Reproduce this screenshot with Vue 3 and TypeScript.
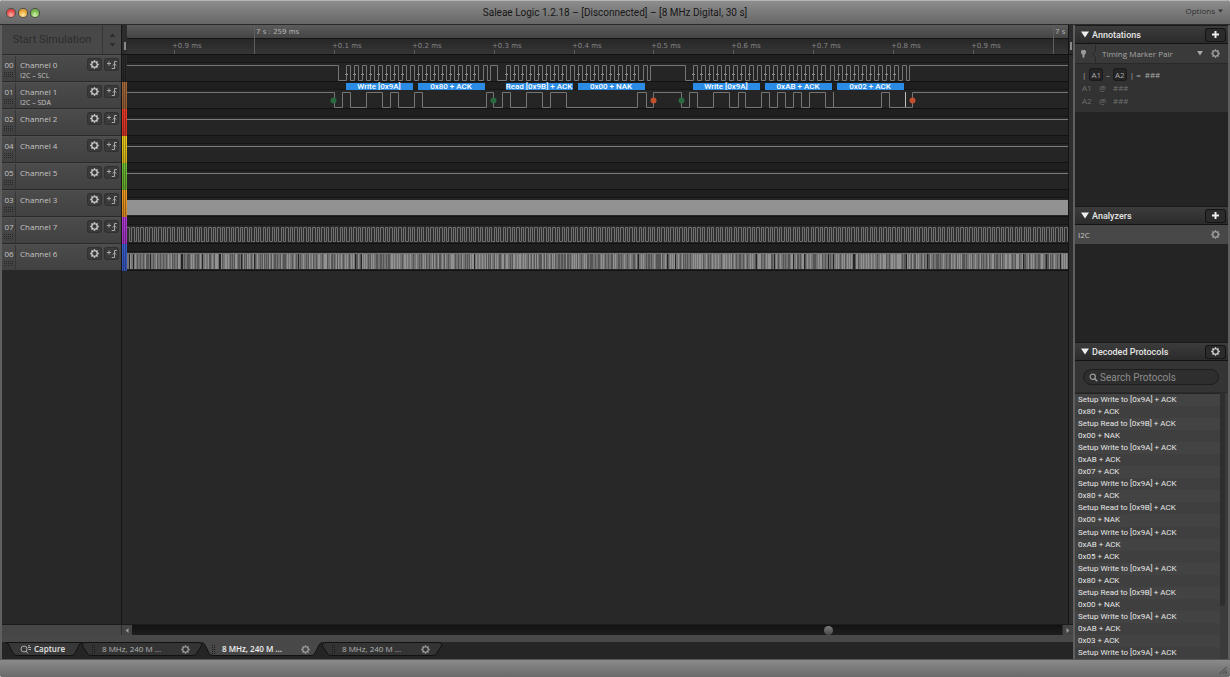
<script setup lang="ts">
import { ref } from 'vue'

interface Channel {
  num: string
  name: string
  sub?: string
  tone: string
  kind: 'scl' | 'sda' | 'flat' | 'solid' | 'clock' | 'dense'
}

const channels: Channel[] = [
  { num: '00', name: 'Channel 0', sub: 'I2C – SCL', tone: 'black', kind: 'scl' },
  { num: '01', name: 'Channel 1', sub: 'I2C – SDA', tone: 'brown', kind: 'sda' },
  { num: '02', name: 'Channel 2', tone: 'red', kind: 'flat' },
  { num: '04', name: 'Channel 4', tone: 'yellow', kind: 'flat' },
  { num: '05', name: 'Channel 5', tone: 'green', kind: 'flat' },
  { num: '03', name: 'Channel 3', tone: 'orange', kind: 'solid' },
  { num: '07', name: 'Channel 7', tone: 'purple', kind: 'clock' },
  { num: '06', name: 'Channel 6', tone: 'blue', kind: 'dense' },
]

const ticks = ['+0.9', '', '+0.1', '+0.2', '+0.3', '+0.4', '+0.5', '+0.6', '+0.7', '+0.8', '+0.9', '']
const tickX = (i: number) => 47 + i * 80 - (i > 5 ? 1 : 0)

const HIGH = 10
const LOW = 25
const FAR = 4000

// Square wave that starts high and toggles at every listed position.
function wave(toggles: number[], high = HIGH, low = LOW): string {
  let d = `M0 ${high + 0.5}`
  let up = true
  for (const x of toggles) {
    up = !up
    d += `H${Math.round(x) + 0.5}V${(up ? high : low) + 0.5}`
  }
  return d + `H${FAR}`
}

const bursts = [
  { start: 219, count: 18 },
  { start: 379, count: 18 },
  { start: 566, count: 27 },
]
const STEP = 8.03
const sclToggles: number[] = []
const samples: number[] = []
const idle = [[211], [363, 370], [523, 558]]
bursts.forEach((b, n) => {
  sclToggles.push(...idle[n])
  for (let i = 0; i < b.count; i++) {
    const x = b.start + i * STEP
    sclToggles.push(x, x + 4)
    if (i % 9 !== 8) samples.push(Math.round(x))
  }
})
sclToggles.push(782)

const sclPath = wave(sclToggles)
const sdaPath = wave([
  207, 215, 223, 239, 255, 263, 271, 287, 295, 359, 366, 375, 383, 399, 415, 423, 439, 510, 519, 526,
  554, 562, 570, 586, 602, 611, 618, 634, 642, 650, 658, 666, 674, 682, 698, 754, 762, 785,
])

const bytes = [
  { x: 219, text: 'Write [0x9A]' },
  { x: 291, text: '0x80 + ACK' },
  { x: 379, text: 'Read [0x9B] + ACK' },
  { x: 451, text: '0x00 + NAK' },
  { x: 566, text: 'Write [0x9A]' },
  { x: 638, text: '0xAB + ACK' },
  { x: 710, text: '0x02 + ACK' },
]
const marks = [
  { x: 206, stop: false },
  { x: 366, stop: false },
  { x: 526, stop: true },
  { x: 554, stop: false },
  { x: 785, stop: true },
]

const clockToggles: number[] = []
for (let x = 2; x < 2400; x += 4.53) clockToggles.push(x, x + 2.2)
const clockPath = wave(clockToggles, 10, 24)

let seed = 17
const rand = () => (seed = (seed * 16807) % 2147483647) / 2147483647
let darkPath = ''
let lightPath = ''
let gapPath = ''
for (let x = 2; x < 2400; ) {
  const r = rand()
  if (r < 0.06) gapPath += `M${x + 0.5} 10V25`
  else if (r < 0.55) darkPath += `M${x + 0.5} 10V25`
  else lightPath += `M${x + 0.5} 10V25`
  x += 1 + Math.floor(rand() * 2.6)
}

const entries = [
  'Setup Write to [0x9A] + ACK', '0x80 + ACK', 'Setup Read to [0x9B] + ACK', '0x00 + NAK',
  'Setup Write to [0x9A] + ACK', '0xAB + ACK', '0x07 + ACK',
  'Setup Write to [0x9A] + ACK', '0x80 + ACK', 'Setup Read to [0x9B] + ACK', '0x00 + NAK',
  'Setup Write to [0x9A] + ACK', '0xAB + ACK', '0x05 + ACK',
  'Setup Write to [0x9A] + ACK', '0x80 + ACK', 'Setup Read to [0x9B] + ACK', '0x00 + NAK',
  'Setup Write to [0x9A] + ACK', '0xAB + ACK', '0x03 + ACK',
  'Setup Write to [0x9A] + ACK',
]

const tabs = [0, 1, 2]
const active = ref(1)
const scroll = ref(751)
const query = ref('')
</script>

<template>
  <div class="window">
    <svg class="defs" width="0" height="0" aria-hidden="true">
      <symbol id="gear" viewBox="0 0 16 16">
        <circle cx="8" cy="8" r="4.8" fill="none" stroke="currentColor" stroke-width="1.9" />
        <path
          d="M8 0.4V3M8 13V15.6M0.4 8H3M13 8H15.6M2.6 2.6L4.5 4.5M11.5 11.5L13.4 13.4M13.4 2.6L11.5 4.5M4.5 11.5L2.6 13.4"
          stroke="currentColor" stroke-width="2.4" fill="none"
        />
      </symbol>
      <symbol id="lens" viewBox="0 0 12 12">
        <circle cx="5" cy="5" r="3.5" fill="none" stroke="currentColor" stroke-width="1.6" />
        <path d="M7.5 7.5L11 11" stroke="currentColor" stroke-width="2" />
      </symbol>
    </svg>

    <header class="titlebar">
      <div class="lights">
        <button class="light close" aria-label="Close"></button>
        <button class="light mini" aria-label="Minimize"></button>
        <button class="light zoom" aria-label="Zoom"></button>
      </div>
      <h1>Saleae Logic 1.2.18 – [Disconnected] – [8 MHz Digital, 30 s]</h1>
      <button class="options">
        Options
        <svg width="5" height="4" viewBox="0 0 6 5"><path d="M0 0.5H6L3 4.5Z" fill="#333" /></svg>
      </button>
    </header>

    <div class="body">
      <main class="main">
        <div class="stage">
          <div class="controls">
            <div class="start">
              <button class="run" disabled>Start Simulation</button>
              <button class="stepper" aria-label="Simulation settings">
                <svg width="7" height="14" viewBox="0 0 7 14">
                  <path d="M0.5 4L3.5 0.5L6.5 4ZM0.5 10L3.5 13.5L6.5 10Z" fill="#2d2d2d" />
                </svg>
              </button>
            </div>
            <div v-for="c in channels" :key="c.num" class="channel">
              <div class="num">
                <span>{{ c.num }}</span>
                <svg width="10" height="6" viewBox="0 0 10 6">
                  <path d="M0 0.5H10M0 2.5H10M0 4.5H10" stroke="#262626" stroke-dasharray="1 1" />
                </svg>
              </div>
              <div class="label">
                <span>{{ c.name }}</span>
                <small v-if="c.sub">{{ c.sub }}</small>
              </div>
              <button class="mini-btn" :aria-label="c.name + ' settings'">
                <svg width="9" height="9"><use href="#gear" /></svg>
              </button>
              <button class="mini-btn" :aria-label="c.name + ' trigger'">
                <svg width="10" height="8" viewBox="0 0 10 8" fill="none" stroke="#a9a9a9">
                  <path d="M0 2.5H4M2 0.5V4.5" />
                  <path d="M9.8 0.5H7.5V7.5H4.8M5.8 4.5L7.5 2.8L9.2 4.5" />
                </svg>
              </button>
            </div>
          </div>

          <div class="strip">
            <div class="strip-head"><i></i></div>
            <div v-for="c in channels" :key="c.num" class="swatch" :class="c.tone"></div>
          </div>

          <div class="plot">
            <svg class="ruler" width="100%" height="30">
              <rect x="0" y="0" width="100%" height="13" fill="url(#rulerTop)" />
              <defs>
                <linearGradient id="rulerTop" x1="0" y1="0" x2="0" y2="1">
                  <stop offset="0" stop-color="#5c5c5c" />
                  <stop offset="1" stop-color="#444" />
                </linearGradient>
                <linearGradient id="rulerLow" x1="0" y1="0" x2="0" y2="1">
                  <stop offset="0" stop-color="#272727" />
                  <stop offset="1" stop-color="#353535" />
                </linearGradient>
              </defs>
              <rect x="0" y="13" width="100%" height="1" fill="#151515" />
              <rect x="0" y="14" width="100%" height="15" fill="url(#rulerLow)" />
              <rect x="0" y="29" width="100%" height="1" fill="#111" />
              <path d="M127.5 0V29M926.5 0V29" stroke="#5e5e5e" />
              <text x="129" y="9" class="major">7 s : 259 ms</text>
              <text x="928" y="9" class="major">7 s</text>
              <g v-for="(t, i) in ticks" :key="i">
                <template v-if="t">
                  <path :d="`M${tickX(i) + 0.5} 25V29`" stroke="#5c5c5c" />
                  <text :x="tickX(i) - 2" y="23" class="minor">{{ t }} ms</text>
                </template>
              </g>
            </svg>
            <div v-for="c in channels" :key="c.num" class="lane">
              <svg width="100%" height="27" fill="none">
                <template v-if="c.kind === 'scl'">
                  <path :d="sclPath" stroke="#757575" />
                  <path v-for="x in samples" :key="x" :d="`M${x - 1} 19.5H${x + 2}M${x + 0.5} 18V20`" stroke="#8e8e8e" />
                </template>
                <template v-else-if="c.kind === 'sda'">
                  <g v-for="b in bytes" :key="b.x">
                    <rect :x="b.x" y="1" width="67" height="7" fill="#2b8ce6" />
                    <text :x="b.x + 33" y="7" class="byte">{{ b.text }}</text>
                  </g>
                  <path :d="sdaPath" stroke="#757575" />
                  <path d="M706.5 10V25" stroke="#757575" />
                  <path d="M778.5 10V25" stroke="#c0c0c0" />
                  <circle v-for="m in marks" :key="m.x" :cx="m.x + 0.5" cy="18.5" r="3" :fill="m.stop ? '#c2502f' : '#2a6a41'" />
                </template>
                <path v-else-if="c.kind === 'flat'" d="M0 10.5H4000" stroke="#7c7c7c" />
                <rect v-else-if="c.kind === 'solid'" x="0" y="10" width="100%" height="15" fill="#929292" />
                <template v-else-if="c.kind === 'clock'">
                  <rect x="0" y="10" width="100%" height="15" fill="#2f2f2f" />
                  <path :d="clockPath" stroke="#707070" />
                </template>
                <template v-else>
                  <rect x="0" y="9" width="100%" height="16" fill="#747474" />
                  <path :d="darkPath" stroke="#565656" />
                  <path :d="lightPath" stroke="#929292" />
                  <path :d="gapPath" stroke="#242424" />
                </template>
              </svg>
            </div>
          </div>

          <div class="gutter"><div class="strip-head"><i></i></div></div>
        </div>

        <div class="scroller">
          <div class="scroll-pad"></div>
          <button class="arrow" aria-label="Scroll left">
            <svg width="4" height="5" viewBox="0 0 4 5"><path d="M3.5 0V5L0.5 2.5Z" fill="#999" /></svg>
          </button>
          <input v-model.number="scroll" type="range" min="0" max="1000" aria-label="Timeline position" />
          <button class="arrow" aria-label="Scroll right">
            <svg width="4" height="5" viewBox="0 0 4 5"><path d="M0.5 0V5L3.5 2.5Z" fill="#999" /></svg>
          </button>
        </div>
        <div class="band"></div>

        <nav class="tabs">
          <button class="tab capture">
            <svg class="shape" width="78" height="15" viewBox="0 0 78 15">
              <path d="M0 0.5Q3 0.5 4 3L8 11Q9 13.5 12 13.5H66Q69 13.5 70 11L74 3Q75 0.5 78 0.5Z" fill="#383838" stroke="#111" />
            </svg>
            <svg class="cap-icon" width="11" height="9" viewBox="0 0 11 9" fill="none" stroke="#aaa">
              <circle cx="4" cy="4" r="3" />
              <path d="M6 6L8 8.5M8 2.5H11M8.5 4.5H11M8 0.8H10" />
            </svg>
            <span>Capture</span>
          </button>
          <button
            v-for="t in tabs" :key="t" class="tab" :class="{ active: t === active }"
            @click="active = t"
          >
            <svg class="shape" width="122" height="15" viewBox="0 0 122 15">
              <template v-if="t === active">
                <path d="M-1 -1L4 3L8 11Q9 13.5 12 13.5H110Q113 13.5 114 11L118 3L123 -1Z" fill="#484848" />
                <path d="M1 0.5Q3 1 4 3L8 11Q9 13.5 12 13.5H110Q113 13.5 114 11L118 3Q119 1 121 0.5" fill="none" stroke="#111" />
              </template>
              <path
                v-else
                d="M1 3Q2 0.5 5 0.5H117Q120 0.5 121 3L116 11Q115 13.5 112 13.5H10Q7 13.5 6 11Z"
                fill="#343434" stroke="#111"
              />
            </svg>
            <svg class="grip" width="3" height="9" viewBox="0 0 3 9">
              <path d="M0.5 0V9M2.5 0V9" stroke="#1c1c1c" stroke-dasharray="1 1" />
            </svg>
            <span>8 MHz, 240 M ...</span>
            <svg class="tab-gear" width="9" height="9"><use href="#gear" /></svg>
          </button>
        </nav>
      </main>

      <aside class="side">
        <section class="panel annotations">
          <div class="head">
            <svg width="8" height="7" viewBox="0 0 8 7"><path d="M0 0.5H8L4 6.5Z" fill="#eee" /></svg>
            <h2>Annotations</h2>
            <button class="head-btn" aria-label="Add annotation">
              <svg width="7" height="7" viewBox="0 0 7 7"><path d="M3.5 0V7M0 3.5H7" stroke="#eee" stroke-width="2" /></svg>
            </button>
          </div>
          <div class="pair">
            <svg class="pin" width="5" height="8" viewBox="0 0 5 8"><path d="M1 0H4L5 1V3L3.5 5V7L2.5 8L1.5 7V5L0 3V1Z" fill="#999" /></svg>
            <svg class="notch" width="4" height="18" viewBox="0 0 4 18"><path d="M3.5 0V6L0.5 9L3.5 12V18" fill="none" stroke="#292929" /></svg>
            <select aria-label="Annotation type"><option>Timing Marker Pair</option></select>
            <svg class="caret" width="6" height="5" viewBox="0 0 7 6"><path d="M0 0H7L3.5 5.5Z" fill="#aaa" /></svg>
            <button class="plain" aria-label="Annotation settings"><svg width="9" height="9"><use href="#gear" /></svg></button>
          </div>
          <div class="values">
            <p class="delta">| <b>A1</b> – <b>A2</b> | = <span>###</span></p>
            <p><span class="c1">A1</span><span class="c2">@</span>###</p>
            <p><span class="c1">A2</span><span class="c2">@</span>###</p>
          </div>
        </section>

        <section class="panel analyzers">
          <div class="head">
            <svg width="8" height="7" viewBox="0 0 8 7"><path d="M0 0.5H8L4 6.5Z" fill="#eee" /></svg>
            <h2>Analyzers</h2>
            <button class="head-btn" aria-label="Add analyzer">
              <svg width="7" height="7" viewBox="0 0 7 7"><path d="M3.5 0V7M0 3.5H7" stroke="#eee" stroke-width="2" /></svg>
            </button>
          </div>
          <div class="analyzer">
            <span>I2C</span>
            <button class="plain" aria-label="I2C settings"><svg width="9" height="9"><use href="#gear" /></svg></button>
          </div>
        </section>

        <section class="panel decoded">
          <div class="head">
            <svg width="8" height="7" viewBox="0 0 8 7"><path d="M0 0.5H8L4 6.5Z" fill="#eee" /></svg>
            <h2>Decoded Protocols</h2>
            <button class="head-btn" aria-label="Decoded protocol settings">
              <svg width="9" height="9"><use href="#gear" /></svg>
            </button>
          </div>
          <div class="search">
            <label class="field">
              <svg width="9" height="9"><use href="#lens" /></svg>
              <input v-model="query" type="text" placeholder="Search Protocols" aria-label="Search Protocols" />
            </label>
          </div>
          <div class="results">
            <ul>
              <li v-for="(e, i) in entries" :key="i">{{ e }}</li>
            </ul>
            <div class="bar"><i></i></div>
          </div>
        </section>
      </aside>
    </div>

    <footer class="status">
      <svg width="8" height="8" viewBox="0 0 8 8"><path d="M0.5 8L8 0.5M3.5 8L8 3.5M6 8L8 6" stroke="#444" /></svg>
    </footer>
  </div>
</template>

<style>
html,
body {
  background: #c9cccb;
}
</style>

<style scoped>
.window {
  height: 100vh;
  display: flex;
  flex-direction: column;
  overflow: hidden;
  border-radius: 4px 4px 3px 3px;
  background: #5f5f5f;
  font-family: "Open Sans", "Noto Sans", sans-serif;
  font-size: 8px;
  line-height: 12px;
  color: #c4c4c4;
}
.defs {
  position: absolute;
}
svg {
  display: block;
  flex: none;
}
button {
  margin: 0;
  padding: 0;
  border: 0;
  background: none;
  font: inherit;
  color: inherit;
}
h1,
h2,
p,
ul {
  margin: 0;
  padding: 0;
  font: inherit;
  list-style: none;
}

.titlebar {
  flex: none;
  height: 24px;
  box-sizing: border-box;
  display: grid;
  grid-template-columns: 1fr auto 1fr;
  align-items: center;
  padding: 0 7px;
  border-top: 1px solid #b5b5b5;
  background: linear-gradient(#8d8d8d, #666);
}
.lights {
  display: flex;
  gap: 4px;
}
.light {
  width: 8px;
  height: 8px;
  border-radius: 50%;
  box-shadow: 0 0 0 1px #4a4a4a;
  box-sizing: border-box;
}
.close {
  background: radial-gradient(circle at 50% 75%, #ffb0a5, #e0433f 65%);
}
.mini {
  background: radial-gradient(circle at 50% 75%, #ffe9a0, #e5a02f 65%);
}
.zoom {
  background: radial-gradient(circle at 50% 75%, #d5f5ae, #6fb045 65%);
}
h1 {
  font-family: Roboto, sans-serif;
  font-size: 10px;
  color: #161616;
}
.options {
  justify-self: end;
  display: flex;
  align-items: center;
  gap: 3px;
  padding-bottom: 3px;
  color: #303030;
}

.body {
  flex: 1;
  min-height: 0;
  display: grid;
  grid-template-columns: minmax(0, 1fr) 153px;
  gap: 2px;
  padding: 0 2px;
  border-top: 1px solid #2a2a2a;
}
.main {
  display: flex;
  flex-direction: column;
  min-height: 0;
  background: #484848;
}
.stage {
  flex: 1;
  min-height: 0;
  display: grid;
  grid-template-columns: 119px 6px minmax(0, 1fr) 5px;
  background: #282828;
}
.start {
  height: 30px;
  box-sizing: border-box;
  display: flex;
  background: #484848;
  border-bottom: 1px solid #2a2a2a;
}
.run {
  flex: 1;
  font-family: Roboto, sans-serif;
  font-size: 11px;
  color: #2c2c2c;
}
.stepper {
  width: 19px;
  display: grid;
  place-items: center;
  border-left: 1px solid #363636;
}
.channel {
  height: 27px;
  box-sizing: border-box;
  display: flex;
  align-items: flex-start;
  gap: 4px;
  padding-right: 3px;
  background: linear-gradient(#4b4b4b, #414141);
  border-top: 1px solid #505050;
  border-bottom: 1px solid #292929;
}
.num {
  width: 14px;
  height: 25px;
  padding: 3px 0 0 1px;
  box-sizing: border-box;
  border-right: 1px solid #363636;
  display: flex;
  flex-direction: column;
  align-items: center;
  gap: 1px;
}
.label {
  flex: 1;
  padding-top: 3px;
}
.label span,
.label small {
  display: block;
}
.label small {
  font-size: 7px;
  line-height: 10px;
}
.mini-btn {
  width: 13px;
  height: 11px;
  margin-top: 3px;
  display: grid;
  place-items: center;
  border-radius: 2px;
  background: #3a3a3a;
  box-shadow: 0 0 0 1px #303030;
  color: #d6d6d6;
}

.strip {
  border-left: 1px solid #151515;
}
.strip-head {
  height: 30px;
  box-sizing: border-box;
  padding: 17px 1px 0;
  background: #2c2c2c;
  border-bottom: 1px solid #111;
}
.strip-head i {
  display: block;
  width: 2px;
  height: 8px;
  margin: 0 auto;
  background: #8a8a8a;
}
.swatch {
  height: 27px;
  background-image:
    linear-gradient(90deg, transparent 1px, rgba(0, 0, 0, 0.3) 1px 2px, transparent 2px 3px, rgba(0, 0, 0, 0.3) 3px 4px, transparent 4px),
    linear-gradient(transparent, rgba(0, 0, 0, 0.15));
}
.black { background-color: #2c2c2c; }
.brown { background-color: #a3683a; }
.red { background-color: #ea3a2a; }
.yellow { background-color: #ecc91c; }
.green { background-color: #6fbc33; }
.orange { background-color: #f29a22; }
.purple { background-color: #b03ad6; }
.blue { background-color: #3a5fd0; }

.plot {
  min-width: 0;
}
.lane {
  height: 27px;
  overflow: hidden;
  background: linear-gradient(#1f1f1f 0 7px, #161616 7px 8px, #252525 8px 26px, #121212 26px);
}
.major {
  font-family: "DejaVu Sans", sans-serif;
  font-size: 7px;
  fill: #b4b4b4;
}
.minor {
  font-family: "DejaVu Sans", sans-serif;
  font-size: 7px;
  fill: #868686;
}
.byte {
  font-family: Roboto, sans-serif;
  font-size: 8px;
  font-weight: 500;
  fill: #fff;
  text-anchor: middle;
}
.gutter {
  background: #2e2e2e;
  border-left: 1px solid #141414;
}

.scroller {
  flex: none;
  height: 11px;
  display: flex;
  background: #161616;
  border-top: 1px solid #1c1c1c;
  box-sizing: border-box;
}
.scroll-pad {
  width: 119px;
  background: #464646;
}
.arrow {
  width: 11px;
  display: grid;
  place-items: center;
  background: #444;
  border-left: 1px solid #2b2b2b;
}
.scroller input {
  flex: 1;
  min-width: 0;
  height: 10px;
  margin: 0;
  appearance: none;
  background: linear-gradient(#121212, #1e1e1e);
}
.scroller input::-webkit-slider-thumb {
  appearance: none;
  width: 9px;
  height: 9px;
  border-radius: 50%;
  background: linear-gradient(#7a7a7a, #484848);
}
.band {
  flex: none;
  height: 7px;
  background: #484848;
}
.tabs {
  flex: none;
  height: 17px;
  display: flex;
  padding-left: 4px;
  background: #252525;
}
.tab {
  position: relative;
  z-index: 0;
  width: 120px;
  height: 14px;
  display: flex;
  align-items: center;
  padding: 0 12px 0 10px;
  box-sizing: border-box;
  color: #b2b2b2;
}
.tab span {
  margin-left: 7px;
}
.shape {
  position: absolute;
  z-index: -1;
  left: -1px;
  top: 0;
  overflow: visible;
}
.capture {
  width: 76px;
  color: #e2e2e2;
  font-weight: 600;
  padding: 0 0 0 14px;
}
.capture span {
  margin-left: 3px;
}
.active {
  z-index: 1;
  color: #f0f0f0;
  font-weight: 600;
}
.tab-gear {
  margin-left: auto;
  color: #a0a0a0;
}

.side {
  display: flex;
  flex-direction: column;
  min-height: 0;
  background: #242424;
}
.annotations {
  flex: 0 0 181px;
}
.analyzers {
  flex: 0 0 136px;
}
.decoded {
  flex: 1;
  min-height: 0;
  display: flex;
  flex-direction: column;
}
.head {
  flex: none;
  height: 19px;
  box-sizing: border-box;
  display: flex;
  align-items: center;
  gap: 3px;
  padding: 0 3px 0 6px;
  border-top: 1px solid #1a1a1a;
  border-bottom: 1px solid #131313;
  background: linear-gradient(#3c3c3c, #2b2b2b);
}
h2 {
  flex: 1;
  font-family: Roboto, sans-serif;
  font-size: 9px;
  font-weight: 500;
  color: #e4e4e4;
}
.head-btn {
  width: 19px;
  height: 12px;
  display: grid;
  place-items: center;
  border-radius: 2px;
  background: #2b2b2b;
  box-shadow: 0 0 0 1px #141414;
  color: #dcdcdc;
}
.pair {
  height: 20px;
  box-sizing: border-box;
  display: flex;
  align-items: center;
  padding: 0 8px 0 6px;
  background: #3a3a3a;
  border-bottom: 1px solid #292929;
}
.notch {
  margin: 0 6px 0 6px;
}
.pair select {
  flex: 1;
  min-width: 0;
  appearance: none;
  border: 0;
  padding: 0;
  background: none;
  font: inherit;
  color: #a6a6a6;
}
.pair .plain {
  margin-left: 8px;
}
.plain {
  color: #a8a8a8;
}
.values {
  padding: 4px 7px 5px;
  background: #323232;
  color: #6f6f6f;
}
.values p {
  height: 13px;
  line-height: 13px;
  display: flex;
}
.values .delta {
  gap: 4px;
  color: #aaa;
}
.delta b {
  font-weight: 400;
  height: 11px;
  line-height: 11px;
  padding: 0 1px;
  margin: 1px 0;
  border-radius: 2px;
  background: #242424;
  box-shadow: 0 0 0 1px #1a1a1a;
}
.c1 {
  width: 17px;
}
.c2 {
  width: 14px;
}
.analyzer {
  height: 19px;
  display: flex;
  align-items: center;
  justify-content: space-between;
  padding: 0 8px 0 3px;
  background: #484848;
}
.search {
  flex: none;
  padding: 8px 9px 7px 8px;
  background: #343434;
  border-bottom: 1px solid #2a2a2a;
}
.field {
  height: 16px;
  box-sizing: border-box;
  display: flex;
  align-items: center;
  gap: 2px;
  padding: 0 5px;
  border: 1px solid #1e1e1e;
  border-radius: 8px;
  background: #2e2e2e;
  color: #999;
}
.field input {
  flex: 1;
  min-width: 0;
  border: 0;
  padding: 0;
  outline: 0;
  background: none;
  font-family: Roboto, sans-serif;
  font-size: 10px;
  color: #ddd;
}
.field input::placeholder {
  color: #8c8c8c;
  opacity: 1;
}
.results {
  flex: 1;
  min-height: 0;
  display: flex;
}
.results ul {
  flex: 1;
  display: flex;
  flex-direction: column;
  padding-top: 1px;
}
.results li {
  flex: 1;
  padding-left: 3px;
  font-family: Roboto, sans-serif;
  background: #434343;
  color: #e6e6e6;
}
.results li:nth-child(even) {
  background: #3f3f3f;
}
.bar {
  width: 7px;
  padding-right: 1px;
  background: #3b3b3b;
}
.bar i {
  display: block;
  width: 5px;
  height: 80%;
  border-radius: 0 0 3px 3px;
  background: #2e2e2e;
}

.status {
  flex: none;
  height: 18px;
  box-sizing: border-box;
  display: flex;
  justify-content: flex-end;
  align-items: flex-end;
  padding: 0 3px 3px;
  border-top: 1px solid #555;
  background: linear-gradient(#8a8a8a, #6a6a6a);
}
</style>
